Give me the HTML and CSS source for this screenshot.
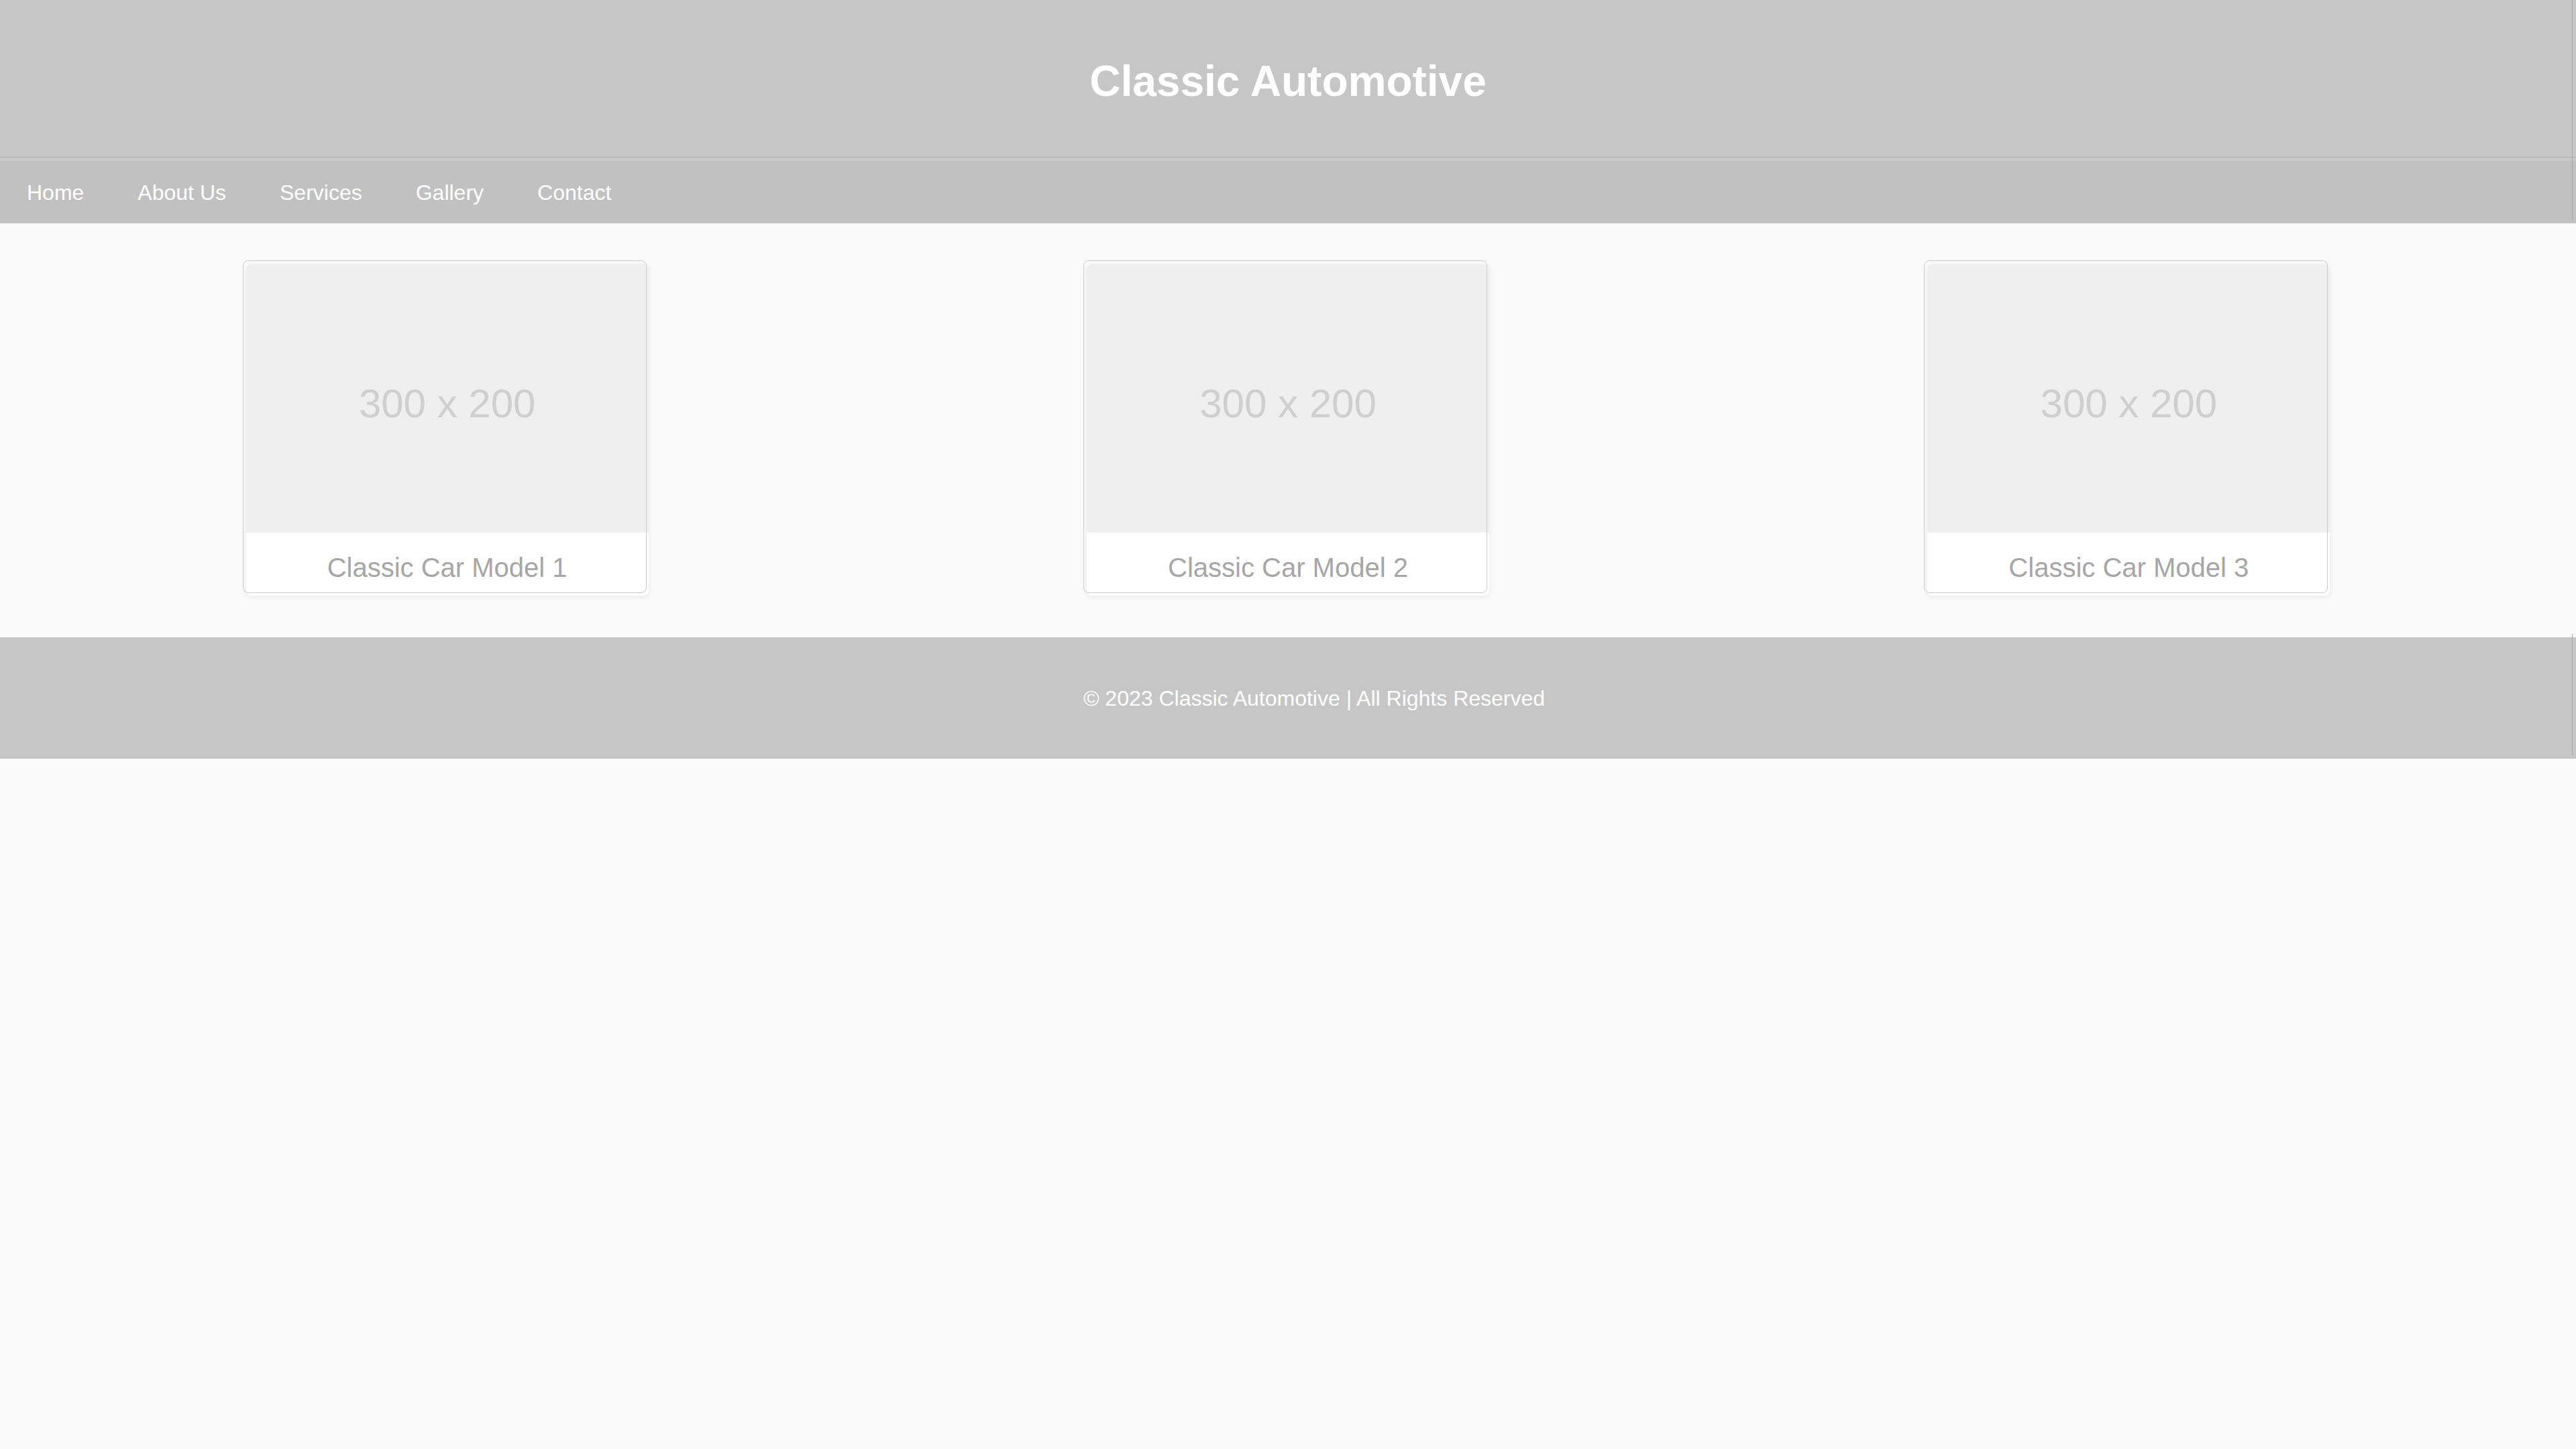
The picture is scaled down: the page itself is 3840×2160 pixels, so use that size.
FILE: index.html
```html
<!DOCTYPE html>
<html lang="en">
<head>
<meta charset="utf-8">
<title>Classic Automotive</title>
<link rel="stylesheet" href="styles.css">
</head>
<body>
<div class="top-bar">
  <header class="site-header">
    <h1 class="site-title">Classic Automotive</h1>
  </header>
  <nav class="site-nav">
    <a class="nav-link" href="#">Home</a>
    <a class="nav-link" href="#">About Us</a>
    <a class="nav-link" href="#">Services</a>
    <a class="nav-link" href="#">Gallery</a>
    <a class="nav-link" href="#">Contact</a>
  </nav>
</div>
<main class="gallery">
  <div class="car-card">
    <div class="car-image">300 x 200</div>
    <p class="car-caption">Classic Car Model 1</p>
  </div>
  <div class="car-card">
    <div class="car-image">300 x 200</div>
    <p class="car-caption">Classic Car Model 2</p>
  </div>
  <div class="car-card">
    <div class="car-image">300 x 200</div>
    <p class="car-caption">Classic Car Model 3</p>
  </div>
</main>
<footer class="site-footer">
  <p class="footer-text">© 2023 Classic Automotive | All Rights Reserved</p>
</footer>
</body>
</html>
```

FILE: styles.css
```css
* {
  box-sizing: border-box;
}

html, body {
  margin: 0;
  padding: 0;
}

body {
  background: #fafafa;
  font-family: "Liberation Sans", Arial, sans-serif;
  color: #333;
}

.top-bar {
  position: relative;
}

.top-bar::after {
  content: "";
  position: absolute;
  top: 0;
  right: 5px;
  width: 1px;
  height: calc(100% - 5px);
  background: #a7a7a7;
}

.site-header {
  height: 235px;
  background: #c6c6c6;
  border-bottom: 1px solid #b0b0b0;
  display: flex;
  align-items: center;
  justify-content: center;
}

.site-title {
  margin: 0;
  font-size: 64px;
  line-height: 1;
  font-weight: 700;
  color: #ffffff;
  padding-top: 8px;
}

.site-nav {
  display: flex;
  align-items: center;
  height: 98px;
  background: #c1c1c1;
  border-top: 5px solid #c8c8c8;
}

.nav-link {
  padding: 0 40px;
  font-size: 32px;
  line-height: 1;
  color: #ffffff;
  text-decoration: none;
}

.gallery {
  display: flex;
  justify-content: space-around;
  padding: 61px 40px 62px;
}

.car-card {
  position: relative;
  width: 600px;
  background: #ffffff;
  border-radius: 8px;
  box-shadow: 0 2px 8px rgba(0, 0, 0, 0.07);
}

.car-card::after {
  content: "";
  position: absolute;
  top: -6px;
  left: -5px;
  width: 100%;
  height: 100%;
  border: 1px solid #cbcbcb;
  border-radius: 8px;
  pointer-events: none;
}

.car-image {
  height: 400px;
  padding-top: 14px;
  background: #efefef;
  border-radius: 8px 8px 0 0;
  display: flex;
  align-items: center;
  justify-content: center;
  font-size: 60px;
  color: #cfcfcf;
}

.car-caption {
  margin: 0;
  padding: 29px 0 19px;
  font-size: 40px;
  line-height: 46px;
  text-align: center;
  color: #a6a6a6;
}

.site-footer {
  position: relative;
  height: 181px;
  background: #c6c6c6;
  display: flex;
  align-items: center;
  justify-content: center;
  padding-left: 78px;
}

.site-footer::after {
  content: "";
  position: absolute;
  top: -5px;
  right: 5px;
  width: 1px;
  height: 181px;
  background: #a7a7a7;
}

.footer-text {
  margin: 0;
  font-size: 32px;
  line-height: 1;
  color: #ffffff;
}
```
